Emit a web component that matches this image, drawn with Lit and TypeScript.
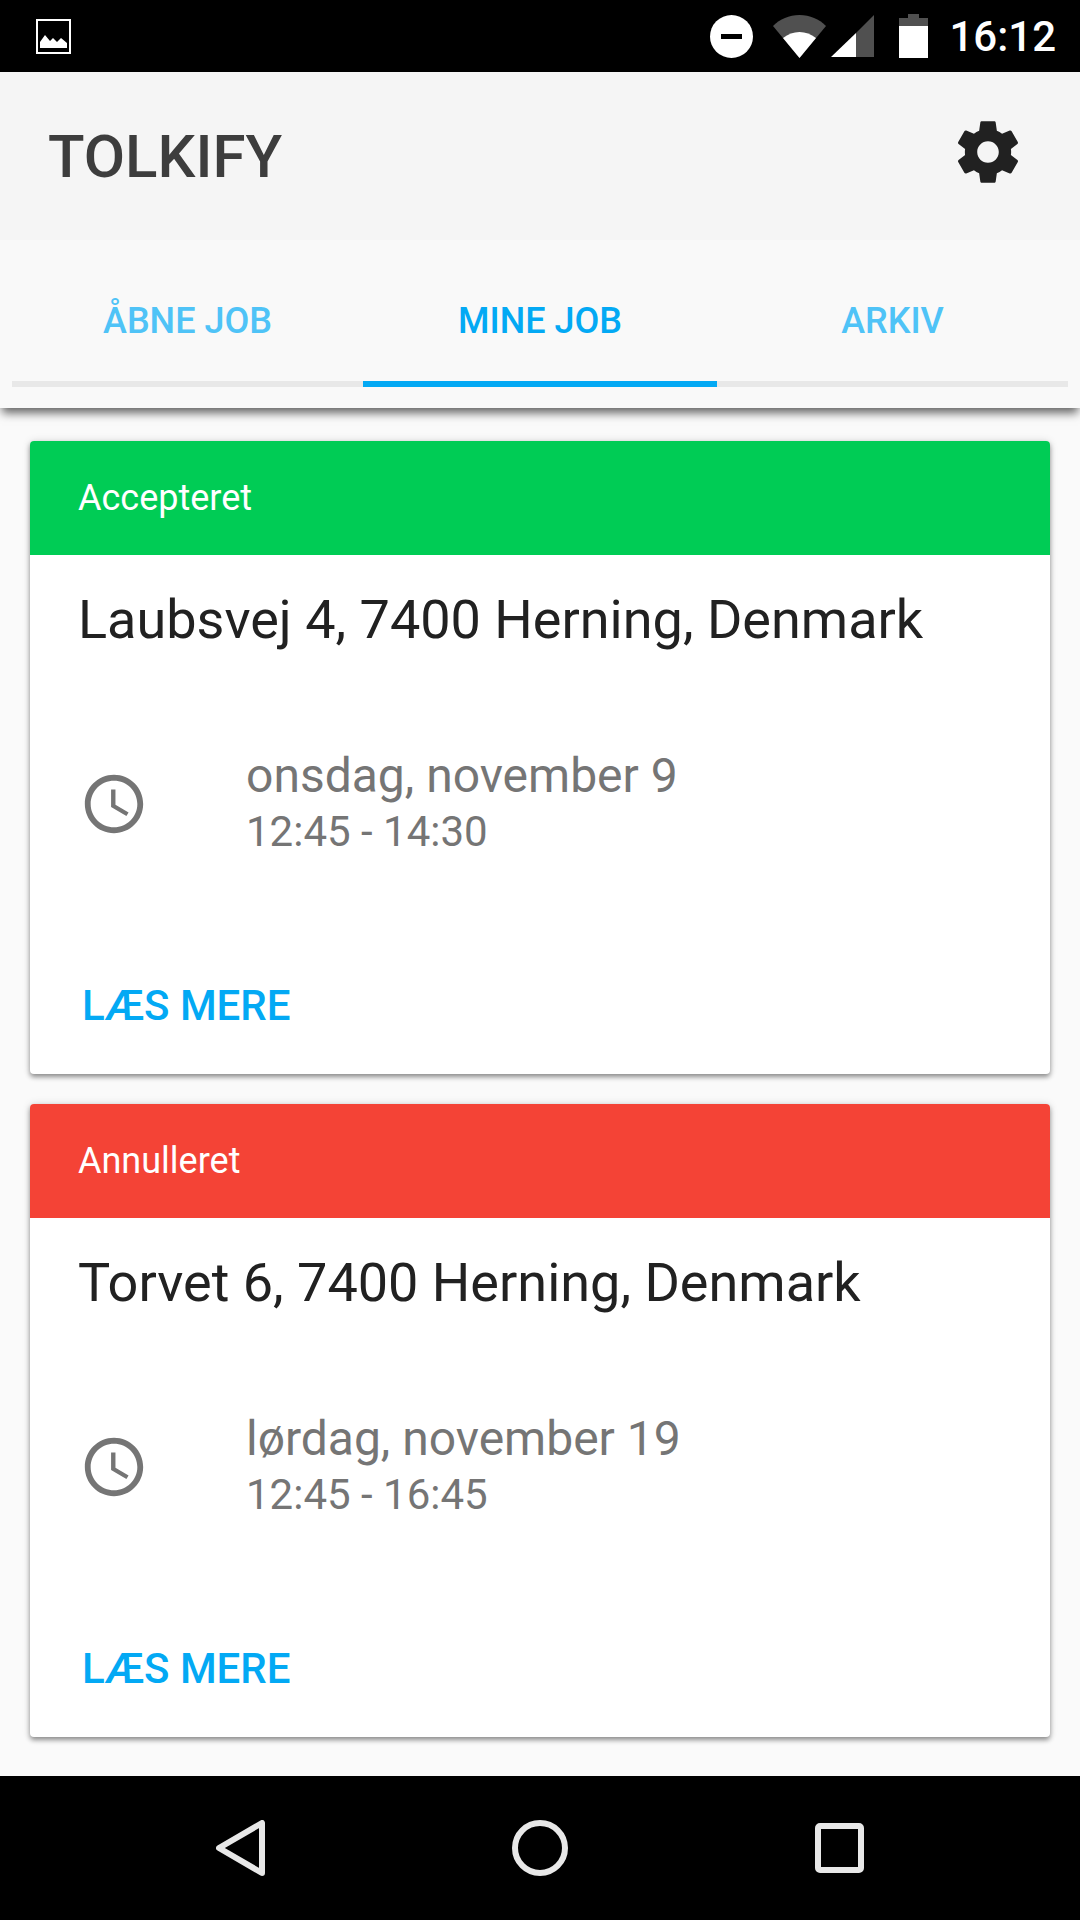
import { LitElement, html, css, svg } from 'lit';
import { customElement, property } from 'lit/decorators.js';

const clock = svg`<path fill="#757575" d="M11.99 2C6.47 2 2 6.48 2 12s4.47 10 9.99 10C17.52 22 22 17.52 22 12S17.52 2 11.99 2zM12 20c-4.42 0-8-3.58-8-8s3.58-8 8-8 8 3.58 8 8-3.58 8-8 8zm.5-13H11v6l5.25 3.15.75-1.23-4.5-2.67z"/>`;
const gear = svg`<path fill="#212121" d="M19.43 12.98c.04-.32.07-.64.07-.98s-.03-.66-.07-.98l2.11-1.65c.19-.15.24-.42.12-.64l-2-3.46c-.12-.22-.39-.3-.61-.22l-2.49 1c-.52-.4-1.08-.73-1.69-.98l-.38-2.65C14.46 2.18 14.25 2 14 2h-4c-.25 0-.46.18-.49.42l-.38 2.65c-.61.25-1.17.59-1.69.98l-2.49-1c-.23-.09-.49 0-.61.22l-2 3.46c-.13.22-.07.49.12.64l2.11 1.65c-.04.32-.07.65-.07.98s.03.66.07.98l-2.11 1.65c-.19.15-.24.42-.12.64l2 3.46c.12.22.39.3.61.22l2.49-1c.52.4 1.08.73 1.69.98l.38 2.65c.03.24.24.42.49.42h4c.25 0 .46-.18.49-.42l.38-2.65c.61-.25 1.17-.59 1.69-.98l2.49 1c.23.09.49 0 .61-.22l2-3.46c.12-.22.07-.49-.12-.64l-2.11-1.65zM12 15.5c-1.93 0-3.5-1.57-3.5-3.5s1.57-3.5 3.5-3.5 3.5 1.57 3.5 3.5-1.57 3.5-3.5 3.5z"/>`;

@customElement('job-card')
export class JobCard extends LitElement {
  static styles = css`
    :host { display: block; }
    .card {
      height: 633px;
      display: flex;
      flex-direction: column;
      background: #fff;
      border-radius: 4px;
      overflow: hidden;
      box-shadow: 0 3px 5px rgba(0, 0, 0, 0.4), 0 0 8px rgba(0, 0, 0, 0.12);
    }
    .status {
      height: 114px;
      padding-left: 48px;
      display: flex;
      align-items: center;
      font-size: 36px;
      color: #fff;
    }
    .status.ok { background: #00cc55; }
    .status.bad { background: #f44336; }
    .address {
      margin: 35px 0 0 48px;
      font-size: 54px;
      line-height: 60px;
      color: #212121;
    }
    .when {
      display: flex;
      align-items: center;
      margin: 98px 0 0 49px;
    }
    .when svg { width: 70px; height: 70px; flex: none; }
    .lines { margin-left: 97px; color: #757575; }
    .date { font-size: 48px; line-height: 56px; }
    .time { font-size: 42px; line-height: 56px; }
    .more {
      margin: 122px 0 0 52px;
      font-size: 42px;
      line-height: 48px;
      font-weight: 500;
      color: #03a9f4;
    }
  `;

  @property() status = '';
  @property() tone = 'ok';
  @property() address = '';
  @property() date = '';
  @property() time = '';

  render() {
    return html`
      <div class="card">
        <div class="status ${this.tone}">${this.status}</div>
        <div class="address">${this.address}</div>
        <div class="when">
          <svg viewBox="0 0 24 24">${clock}</svg>
          <div class="lines">
            <div class="date">${this.date}</div>
            <div class="time">${this.time}</div>
          </div>
        </div>
        <div class="more">LÆS MERE</div>
      </div>
    `;
  }
}

@customElement('app-root')
export class AppRoot extends LitElement {
  static styles = css`
    :host {
      display: flex;
      flex-direction: column;
      height: 1920px;
      font-family: Roboto, sans-serif;
      background: #fafafa;
    }
    .status-bar {
      height: 72px;
      flex: none;
      background: #000;
      display: flex;
      align-items: center;
      padding: 0 24px 0 36px;
    }
    .status-bar svg { display: block; flex: none; }
    .spacer { flex: 1; }
    .dnd { width: 43px; height: 43px; }
    .wifi { width: 53px; height: 43px; margin-left: 20px; }
    .signal { width: 43px; height: 43px; margin-left: 5px; }
    .battery { width: 29px; height: 44px; margin-left: 25px; }
    .clock-text { margin-left: 21px; font-size: 42px; font-weight: 500; color: #fff; }
    .toolbar {
      height: 168px;
      flex: none;
      box-sizing: border-box;
      background: #f5f5f5;
      display: flex;
      align-items: center;
      justify-content: space-between;
      padding: 0 55px 0 48px;
    }
    .title { font-size: 60px; font-weight: 500; color: #3d3d3d; }
    .toolbar svg { width: 74px; height: 74px; margin-top: -8px; }
    .tabs {
      position: relative;
      height: 168px;
      flex: none;
      box-sizing: border-box;
      background: #f9f9f9;
      padding: 0 12px;
      display: grid;
      grid-template-columns: 351px 354px 351px;
      box-shadow: 0 7px 9px -2px rgba(0, 0, 0, 0.6);
      clip-path: inset(0 0 -24px 0);
    }
    .tab {
      height: 147px;
      box-sizing: border-box;
      border-bottom: 6px solid #e8e8e8;
      padding-bottom: 36px;
      display: flex;
      align-items: flex-end;
      justify-content: center;
      font-size: 36px;
      line-height: 48px;
      font-weight: 500;
      color: #4fc3f7;
    }
    .tab.active { color: #03a9f4; border-bottom-color: #03a9f4; }
    .list {
      flex: 1;
      display: flex;
      flex-direction: column;
      gap: 30px;
      padding: 33px 30px 0;
    }
    .nav {
      height: 144px;
      flex: none;
      background: #000;
      display: flex;
      align-items: center;
      gap: 247px;
      padding: 0 0 0 216px;
      box-sizing: border-box;
    }
    .nav svg { display: block; flex: none; }
  `;

  render() {
    return html`
      <div class="status-bar">
        <svg width="35" height="35" viewBox="0 0 35 35">
          <rect x="1" y="1" width="33" height="33" fill="none" stroke="#fff" stroke-width="2"/>
          <path fill="#fff" d="M4 29v-6l5-7 5 6 3-3 4 4 4-4 6 5v5z"/>
        </svg>
        <div class="spacer"></div>
        <svg class="dnd" viewBox="0 0 43 43">
          <circle cx="21.5" cy="21.5" r="21.5" fill="#fff"/>
          <rect x="11" y="19" width="21" height="5" fill="#000"/>
        </svg>
        <svg class="wifi" viewBox="0 0 53 43">
          <path fill="#505050" d="M0 11C7 4 16 0 26.5 0S46 4 53 11L26.5 43z"/>
          <path fill="#fff" d="M10 23c5-4 10.500-6 16.500-6S38 19 43 23L26.500 43z"/>
        </svg>
        <svg class="signal" viewBox="0 0 43 43">
          <path fill="#505050" d="M43 0v42H25V18z"/>
          <path fill="#fff" d="M0 42l25-24v24z"/>
        </svg>
        <svg class="battery" viewBox="0 0 29 44">
          <path fill="#505050" d="M9 0h11v4h9v8H0V4h9z"/>
          <rect y="12" width="29" height="32" fill="#fff"/>
        </svg>
        <span class="clock-text">16:12</span>
      </div>
      <div class="toolbar">
        <span class="title">TOLKIFY</span>
        <svg viewBox="0 0 24 24">${gear}</svg>
      </div>
      <div class="tabs">
        <div class="tab">ÅBNE JOB</div>
        <div class="tab active">MINE JOB</div>
        <div class="tab">ARKIV</div>
      </div>
      <div class="list">
        <job-card status="Accepteret" tone="ok" address="Laubsvej 4, 7400 Herning, Denmark"
          date="onsdag, november 9" time="12:45 - 14:30"></job-card>
        <job-card status="Annulleret" tone="bad" address="Torvet 6, 7400 Herning, Denmark"
          date="lørdag, november 19" time="12:45 - 16:45"></job-card>
      </div>
      <div class="nav">
        <svg width="49" height="56" viewBox="0 0 49 56">
          <path fill="none" stroke="#e8e8e8" stroke-width="6" stroke-linejoin="round" d="M46 3v50L3 28z"/>
        </svg>
        <svg width="56" height="56" viewBox="0 0 56 56">
          <circle cx="28" cy="28" r="25" fill="none" stroke="#e8e8e8" stroke-width="6"/>
        </svg>
        <svg width="49" height="50" viewBox="0 0 49 50">
          <rect x="3" y="3" width="43" height="44" rx="2" fill="none" stroke="#e8e8e8" stroke-width="6"/>
        </svg>
      </div>
    `;
  }
}
